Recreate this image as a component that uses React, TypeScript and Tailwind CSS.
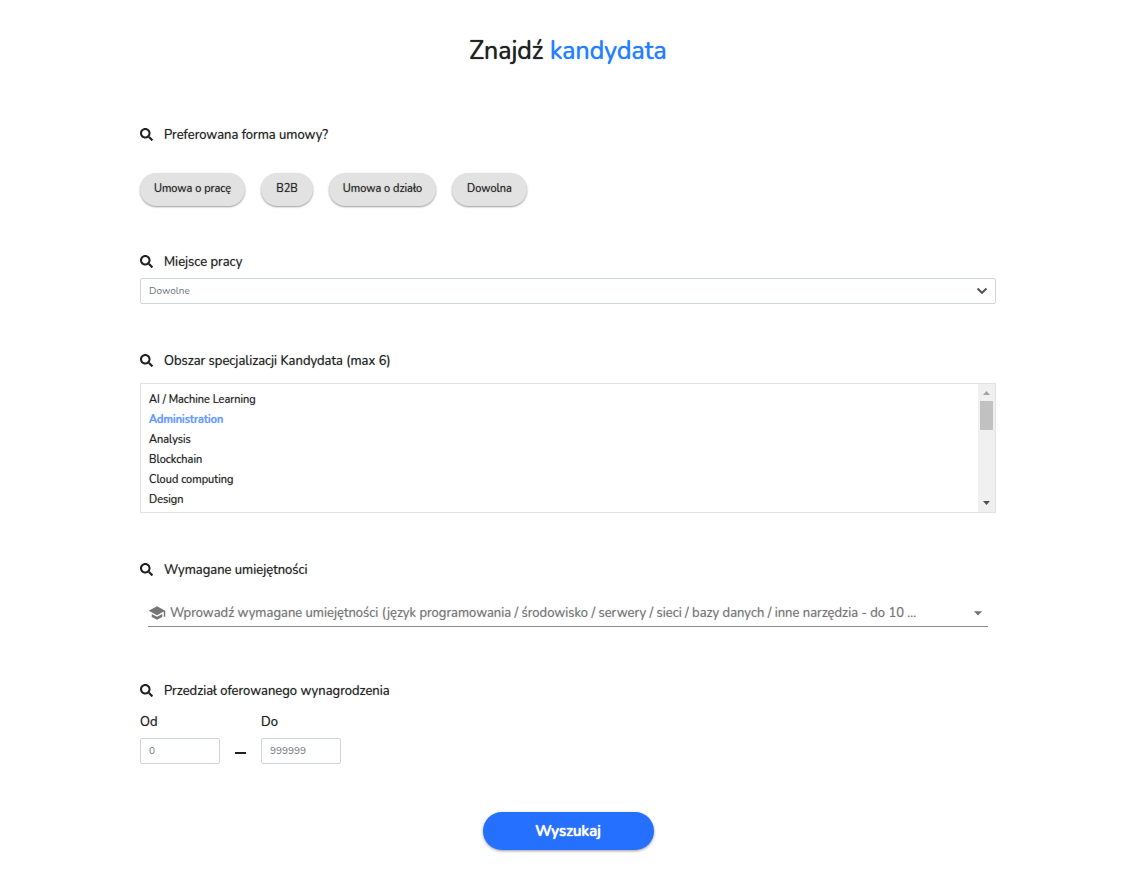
import { useState, type ReactNode } from "react";
import { FaSearch } from "react-icons/fa";
import { MdArrowDropDown, MdSchool } from "react-icons/md";

const contracts = [
  { name: "Umowa o pracę", width: "w-[105px]" },
  { name: "B2B", width: "w-[52px]" },
  { name: "Umowa o działo", width: "w-[107px]" },
  { name: "Dowolna", width: "w-[75px]" },
];

const areas = [
  "AI / Machine Learning",
  "Administration",
  "Analysis",
  "Blockchain",
  "Cloud computing",
  "Design",
];

function Heading({ children, id, htmlFor }: { children: ReactNode; id?: string; htmlFor?: string }) {
  return (
    <div className="flex h-5 items-center gap-[11px] text-[13px] leading-5 [text-shadow:0_0_1px_#21212188]">
      <FaSearch className="-mt-[2px] size-[13px] shrink-0" />
      {htmlFor ? <label htmlFor={htmlFor}>{children}</label> : <h2 id={id}>{children}</h2>}
    </div>
  );
}

function Amount({ id, label, placeholder }: { id: string; label: string; placeholder: string }) {
  return (
    <div className="flex flex-col gap-[6px]">
      <label htmlFor={id} className="text-[13px] leading-5 [text-shadow:0_0_1px_#21212188]">
        {label}
      </label>
      <input
        id={id}
        inputMode="numeric"
        placeholder={placeholder}
        className="h-[26px] w-20 rounded-[2px] border border-[#ced4da] px-2 text-[10px] outline-none placeholder:text-[#6c757d] focus:border-[#2670ff]"
      />
    </div>
  );
}

export default function App() {
  const [contract, setContract] = useState("");
  const [selected, setSelected] = useState(["Administration"]);

  const toggle = (area: string) =>
    setSelected((current) =>
      current.includes(area) ? current.filter((item) => item !== area) : [...current, area].slice(0, 6),
    );

  return (
    <main className="bg-white pt-[35px] pr-[142px] pb-[27px] pl-[140px] font-['Nunito','Lato','Open_Sans',sans-serif] text-[#212121]">
      <h1 className="text-center text-[25px] leading-8 [text-shadow:0_0_1px_currentColor]">
        Znajdź <span className="text-[#267dff] [text-shadow:0_0_1px_currentColor]">kandydata</span>
      </h1>

      <form onSubmit={(event) => event.preventDefault()} className="pt-[58px]">
        <section className="flex flex-col gap-7">
          <Heading id="contract">Preferowana forma umowy?</Heading>
          <div role="group" aria-labelledby="contract" className="flex flex-wrap gap-4">
            {contracts.map(({ name, width }) => (
              <button
                key={name}
                type="button"
                aria-pressed={contract === name}
                onClick={() => setContract(name)}
                className={`${width} h-[33px] rounded-full bg-[#e2e2e2] text-[11px] whitespace-nowrap shadow-[0_1px_2px_rgba(0,0,0,0.4)] [text-shadow:0_0_1px_#21212188] hover:bg-[#d8d8d8]`}
              >
                {name}
              </button>
            ))}
          </div>
        </section>

        <section className="flex flex-col gap-[6px] pt-[46px]">
          <Heading htmlFor="place">Miejsce pracy</Heading>
          <div className="grid items-center">
            <select
              id="place"
              className="col-start-1 row-start-1 h-[26px] w-full appearance-none rounded-[2px] border border-[#ced4da] bg-white px-2 text-[10px] text-[#6c757d] outline-none"
            >
              <option>Dowolne</option>
            </select>
            <svg
              viewBox="0 0 12 8"
              className="pointer-events-none col-start-1 row-start-1 mr-2 h-2 w-3 justify-self-end"
              fill="none"
              stroke="#555"
              strokeWidth="2"
            >
              <path d="M1.500 1.500 6 5.800l4.500-4.300" />
            </svg>
          </div>
        </section>

        <section className="flex flex-col gap-3 pt-[47px]">
          <Heading id="areas">Obszar specjalizacji Kandydata (max 6)</Heading>
          <div className="flex h-[130px] overflow-hidden border border-[#e2e2e2]">
            <div role="listbox" aria-labelledby="areas" aria-multiselectable="true" className="flex grow flex-col px-2 pt-[6px]">
              {areas.map((area) => (
                <button
                  key={area}
                  type="button"
                  role="option"
                  aria-selected={selected.includes(area)}
                  onClick={() => toggle(area)}
                  className={`h-5 shrink-0 text-left text-[11px] leading-5 ${
                    selected.includes(area)
                      ? "font-semibold text-[#6699ff] [text-shadow:0_0_1px_#6699ff]"
                      : "[text-shadow:0_0_1px_#21212188]"
                  }`}
                >
                  {area}
                </button>
              ))}
            </div>
            <div aria-hidden="true" className="flex w-[17px] flex-col items-center bg-[#f0f0f0]">
              <svg viewBox="0 0 17 17" className="size-[17px] shrink-0">
                <path d="M5 11h7L8.500 7z" fill="#a3a3a3" />
              </svg>
              <div className="h-[29px] w-[13px] bg-[#c1c1c1]" />
              <svg viewBox="0 0 17 17" className="mt-auto size-[17px] shrink-0">
                <path d="M5 6h7L8.500 10z" fill="#505050" />
              </svg>
            </div>
          </div>
        </section>

        <section className="flex flex-col gap-5 pt-[47px]">
          <Heading htmlFor="skills">Wymagane umiejętności</Heading>
          <div className="mx-2 flex h-[27px] items-center gap-1 border-b border-[#8c8c8c] text-[#757575]">
            <MdSchool className="size-[18px] shrink-0" />
            <input
              id="skills"
              placeholder="Wprowadź wymagane umiejętności (język programowania / środowisko / serwery / sieci / bazy danych / inne narzędzia - do 10 ..."
              className="min-w-0 grow pt-[2px] text-[13px] text-ellipsis outline-none placeholder:text-[#757575] placeholder:[text-shadow:0_0_1px_#75757588]"
            />
            <MdArrowDropDown className="size-5 shrink-0" />
          </div>
        </section>

        <section className="flex flex-col gap-[11px] pt-[54px]">
          <Heading>Przedział oferowanego wynagrodzenia</Heading>
          <div className="flex items-end gap-[15px]">
            <Amount id="from" label="Od" placeholder="0" />
            <div aria-hidden="true" className="mb-[10px] h-[2px] w-[11px] bg-[#212121]" />
            <Amount id="to" label="Do" placeholder="999999" />
          </div>
        </section>

        <div className="flex justify-center pt-12">
          <button
            type="submit"
            className="h-[38px] w-[171px] rounded-full bg-[#2670ff] text-[15px] font-medium text-white shadow-[0_1px_3px_rgba(0,0,0,0.4)] [text-shadow:0_0_1px_#ffffff,0_0_1px_#ffffff] hover:bg-[#1b62eb]"
          >
            Wyszukaj
          </button>
        </div>
      </form>
    </main>
  );
}
